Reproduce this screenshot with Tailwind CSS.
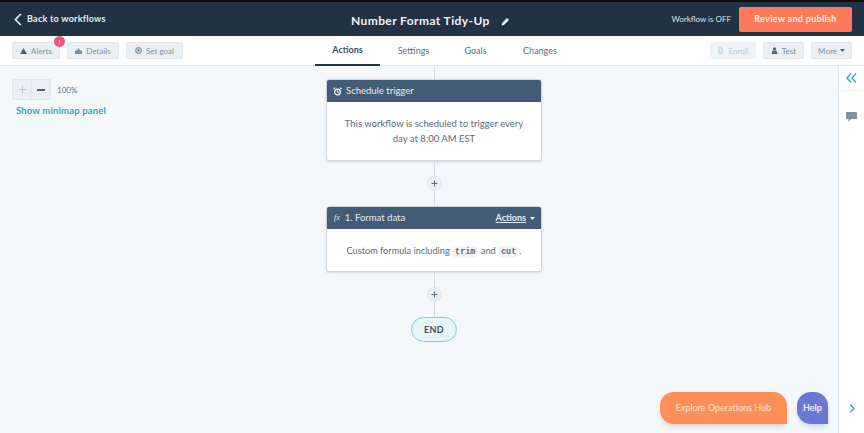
<!DOCTYPE html>
<html lang="en">
<head>
    <meta charset="UTF-8">
    <title>Number Format Tidy-Up</title>
    <script src="https://cdn.jsdelivr.net/npm/@tailwindcss/browser@4"></script>
</head>
<body class="w-[864px] h-[433px] overflow-hidden bg-[#f4f8fa] font-['Lato',sans-serif] text-[#33475b]">
    <!-- Top bar -->
    <header class="h-[36px] bg-[#213343] border-t-[2px] border-[#0b0f14] flex items-center pl-[14px] pr-[12px] relative">
        <div class="flex items-center gap-[5px] text-white">
            <svg width="8" height="13" viewBox="0 0 8 13" fill="none" stroke="#f2f5f7" stroke-width="1.6"><path d="M6.8 1 1.4 6.5l5.4 5.5"/></svg>
            <span class="text-[9px] font-bold tracking-[0.25px] text-[#e6ebef]">Back to workflows</span>
        </div>
        <div class="absolute left-[351px] top-[11px] flex items-center gap-[11px] text-[#eef2f5]">
            <span class="text-[12px] leading-[16px] font-bold tracking-[0.4px]">Number Format Tidy-Up</span>
            <svg width="9" height="9" viewBox="0 0 9 9" fill="#e8edf1"><path d="M0.5 8.5 1 6 6 1l2 2-5 5z"/></svg>
        </div>
        <div class="ml-auto flex items-center gap-[8px]">
            <span class="text-[8px] text-[#dfe5ea]">Workflow is OFF</span>
            <button class="w-[113px] h-[25px] bg-[#ff7a59] rounded-[2px] text-[#fff0ea] text-[9px] font-bold tracking-[0.3px]">Review and publish</button>
        </div>
    </header>

    <!-- Toolbar -->
    <div class="h-[30px] bg-white border-b border-[#e3e8ec] flex items-center pl-[12px] pr-[12px] relative">
        <div class="flex items-center gap-[7px]">
            <button class="relative w-[48px] h-[17px] bg-[#e9eff3] border border-[#e0e6ea] rounded-[2px] flex items-center justify-center gap-[4px] text-[8px] text-[#7f929f]">
                <svg width="7" height="6" viewBox="0 0 7 6" fill="#516577"><path d="M3.5 0 7 6H0z"/></svg>Alerts
                <span class="absolute right-[-6px] top-[-7px] w-[11px] h-[11px] rounded-full bg-[#f2547d] text-white text-[6px] leading-[11px] text-center">!</span>
            </button>
            <button class="w-[52px] h-[17px] bg-[#e9eff3] border border-[#e0e6ea] rounded-[2px] flex items-center justify-center gap-[4px] text-[8px] text-[#7f929f]">
                <svg width="7" height="6" viewBox="0 0 7 6" fill="#7f929f"><path d="M0 6V3l2-1 1.5-2L5 2l2 1v3z"/></svg>Details
            </button>
            <button class="w-[57px] h-[17px] bg-[#e9eff3] border border-[#e0e6ea] rounded-[2px] flex items-center justify-center gap-[4px] text-[8px] text-[#7f929f]">
                <svg width="7" height="7" viewBox="0 0 7 7" fill="none" stroke="#7f929f" stroke-width="1.2"><circle cx="3.5" cy="3.5" r="2.8"/><circle cx="3.5" cy="3.5" r="0.8"/></svg>Set goal
            </button>
        </div>
        <nav class="absolute left-[315px] top-0 h-[29px] flex text-[9px]">
            <a class="w-[65px] flex items-center justify-center font-bold border-b-[2px] border-[#213343] h-[30px] text-[#3d4f5f]">Actions</a>
            <a class="ml-[1px] w-[65px] flex items-center justify-center text-[#5f7180]">Settings</a>
            <a class="w-[59px] flex items-center justify-center text-[#5f7180]">Goals</a>
            <a class="ml-[2px] w-[66px] flex items-center justify-center text-[#5f7180]">Changes</a>
        </nav>
        <div class="ml-auto flex items-center gap-[7px]">
            <button class="w-[46px] h-[17px] bg-[#eef3f5] border border-[#eef3f5] rounded-[2px] flex items-center justify-center gap-[4px] text-[8px] text-[#bcc9d2]">
                <svg width="7" height="7" viewBox="0 0 7 7" fill="none" stroke="#bcc9d2" stroke-width="1"><path d="M1 1h4v4M6 6H2V2"/></svg>Enroll
            </button>
            <button class="w-[41px] h-[17px] bg-[#e9eff3] border border-[#e0e6ea] rounded-[2px] flex items-center justify-center gap-[4px] text-[8px] text-[#7f929f]">
                <svg width="7" height="7" viewBox="0 0 7 7" fill="#516577"><circle cx="3.5" cy="1.8" r="1.6"/><path d="M0.5 7 1.5 3.6h4L6.5 7z"/></svg>Test
            </button>
            <button class="w-[41px] h-[17px] bg-[#e9eff3] border border-[#e0e6ea] rounded-[2px] flex items-center justify-center gap-[3px] text-[8px] text-[#7f929f]">More
                <svg width="5" height="3" viewBox="0 0 5 3" fill="#516577"><path d="M0 0h5L2.5 3z"/></svg>
            </button>
        </div>
    </div>

    <!-- Canvas -->
    <main class="h-[367px] flex relative">
        <div class="w-[838px] h-full relative flex flex-col items-center pl-[30px]">
            <!-- Zoom -->
            <div class="absolute left-[12px] top-[13px] flex items-center">
                <div class="flex w-[39px] h-[21px] bg-[#e9eff3] border border-[#e0e6ea] rounded-[2px] text-center">
                    <span class="w-[19px] border-r border-[#e0e6ea] flex items-center justify-center">
                        <svg width="7" height="7" viewBox="0 0 7 7" stroke="#bcc9d2" stroke-width="1"><path d="M3.5 0v7M0 3.5h7"/></svg>
                    </span>
                    <span class="flex-1 flex items-center justify-center">
                        <svg width="8" height="2" viewBox="0 0 8 2" fill="#516577"><path d="M0 0h8v2H0z"/></svg>
                    </span>
                </div>
                <span class="ml-[6px] text-[8px] text-[#5f7180]">100%</span>
            </div>
            <a class="absolute left-[16px] top-[39px] text-[9.5px] leading-[12px] font-bold text-[#2fa9b8] tracking-[0.15px]">Show minimap panel</a>

            <div class="w-px h-[13px] bg-[#d3dce3]"></div>

            <!-- Trigger card -->
            <section class="w-[216px] h-[82px] bg-white border border-[#cfd8df] rounded-[3px] shadow-sm overflow-hidden">
                <div class="h-[22px] bg-[#425b76] flex items-center pl-[6px] gap-[4px] text-[#e6ebf0] text-[9.5px]">
                    <svg width="9" height="9" viewBox="0 0 9 9" fill="none" stroke="#fff" stroke-width="1.2"><circle cx="4.5" cy="5" r="2.9"/><path d="M0.6 2 2 0.6M8.4 2 7 0.6M4.5 3.4V5l1 .7"/></svg>
                    Schedule trigger
                </div>
                <p class="px-[16px] pt-[14px] text-center text-[9.5px] leading-[15px] text-[#5a6b7a]">This workflow is scheduled to trigger every day at 8:00 AM EST</p>
            </section>

            <div class="w-px h-[45px] bg-[#d3dce3] relative">
                <span class="absolute left-[-7px] top-[15px] w-[15px] h-[15px] rounded-full bg-[#e9eff3] border border-[#e0e6ea] flex items-center justify-center">
                    <svg width="7" height="7" viewBox="0 0 7 7" stroke="#5a6b7a" stroke-width="1"><path d="M3.5 0.5v6M0.5 3.5h6"/></svg>
                </span>
            </div>

            <!-- Action card -->
            <section class="w-[216px] h-[66px] bg-white border border-[#cfd8df] rounded-[3px] shadow-sm overflow-hidden">
                <div class="h-[22px] bg-[#425b76] flex items-center pl-[7px] pr-[6px] text-[#e6ebf0] text-[9.5px]">
                    <span class="font-['Liberation_Serif',serif] italic text-[8px] mr-[5px]">fx</span>1. Format data
                    <span class="ml-auto font-bold underline text-[9px] mr-[4px]">Actions</span>
                    <svg width="5" height="3" viewBox="0 0 5 3" fill="#fff"><path d="M0 0h5L2.5 3z"/></svg>
                </div>
                <p class="pt-[14px] text-center text-[9.2px] leading-[15px] text-[#5a6b7a]">Custom formula including <code class="font-['Liberation_Mono',monospace] font-bold text-[8.5px] bg-[#f1f4f6] px-[2px] py-[1px] mx-[1px] rounded-[2px]">trim</code> and <code class="font-['Liberation_Mono',monospace] font-bold text-[8.5px] bg-[#f1f4f6] px-[2px] py-[1px] mx-[1px] rounded-[2px]">cut</code>.</p>
            </section>

            <div class="w-px h-[45px] bg-[#d3dce3] relative">
                <span class="absolute left-[-7px] top-[15px] w-[15px] h-[15px] rounded-full bg-[#e9eff3] border border-[#e0e6ea] flex items-center justify-center">
                    <svg width="7" height="7" viewBox="0 0 7 7" stroke="#5a6b7a" stroke-width="1"><path d="M3.5 0.5v6M0.5 3.5h6"/></svg>
                </span>
            </div>

            <div class="w-[46px] h-[25px] rounded-full bg-[#e5f5f8] border-[1.5px] border-[#7fd1de] flex items-center justify-center text-[9px] font-bold text-[#3d4f5f] tracking-[0.3px]">END</div>

            <!-- Floating buttons -->
            <button class="absolute left-[660px] top-[326px] w-[127px] h-[32px] bg-[#ff8f59] rounded-tl-[14px] rounded-tr-[14px] rounded-bl-[14px] text-[#fde3d3] text-[9px] shadow-md">Explore Operations Hub</button>
            <button class="absolute left-[797px] top-[326px] w-[31px] h-[32px] bg-[#6a78d1] rounded-tl-[14px] rounded-tr-[14px] rounded-bl-[14px] text-[#eef0fb] text-[9px] font-bold shadow-md">Help</button>
        </div>

        <!-- Side panel -->
        <aside class="w-[26px] h-full bg-white border-l border-[#e3e8ec] flex flex-col items-center">
            <div class="w-full h-[25px] border-b border-[#eef2f4] flex items-center justify-center">
                <svg width="11" height="10" viewBox="0 0 11 10" fill="none" stroke="#2fa9b8" stroke-width="1.4"><path d="M5 0.5 1 5l4 4.5M10 0.5 6 5l4 4.5"/></svg>
            </div>
            <svg class="mt-[21px]" width="11" height="10" viewBox="0 0 11 10" fill="#7f929f"><path d="M0 0h11v7H5L2.5 10V7H0z"/></svg>
            <svg class="mt-[282px]" width="6" height="9" viewBox="0 0 6 9" fill="none" stroke="#2fa9b8" stroke-width="1.4"><path d="M1 0.5 5 4.5 1 8.5"/></svg>
        </aside>
    </main>
</body>
</html>
